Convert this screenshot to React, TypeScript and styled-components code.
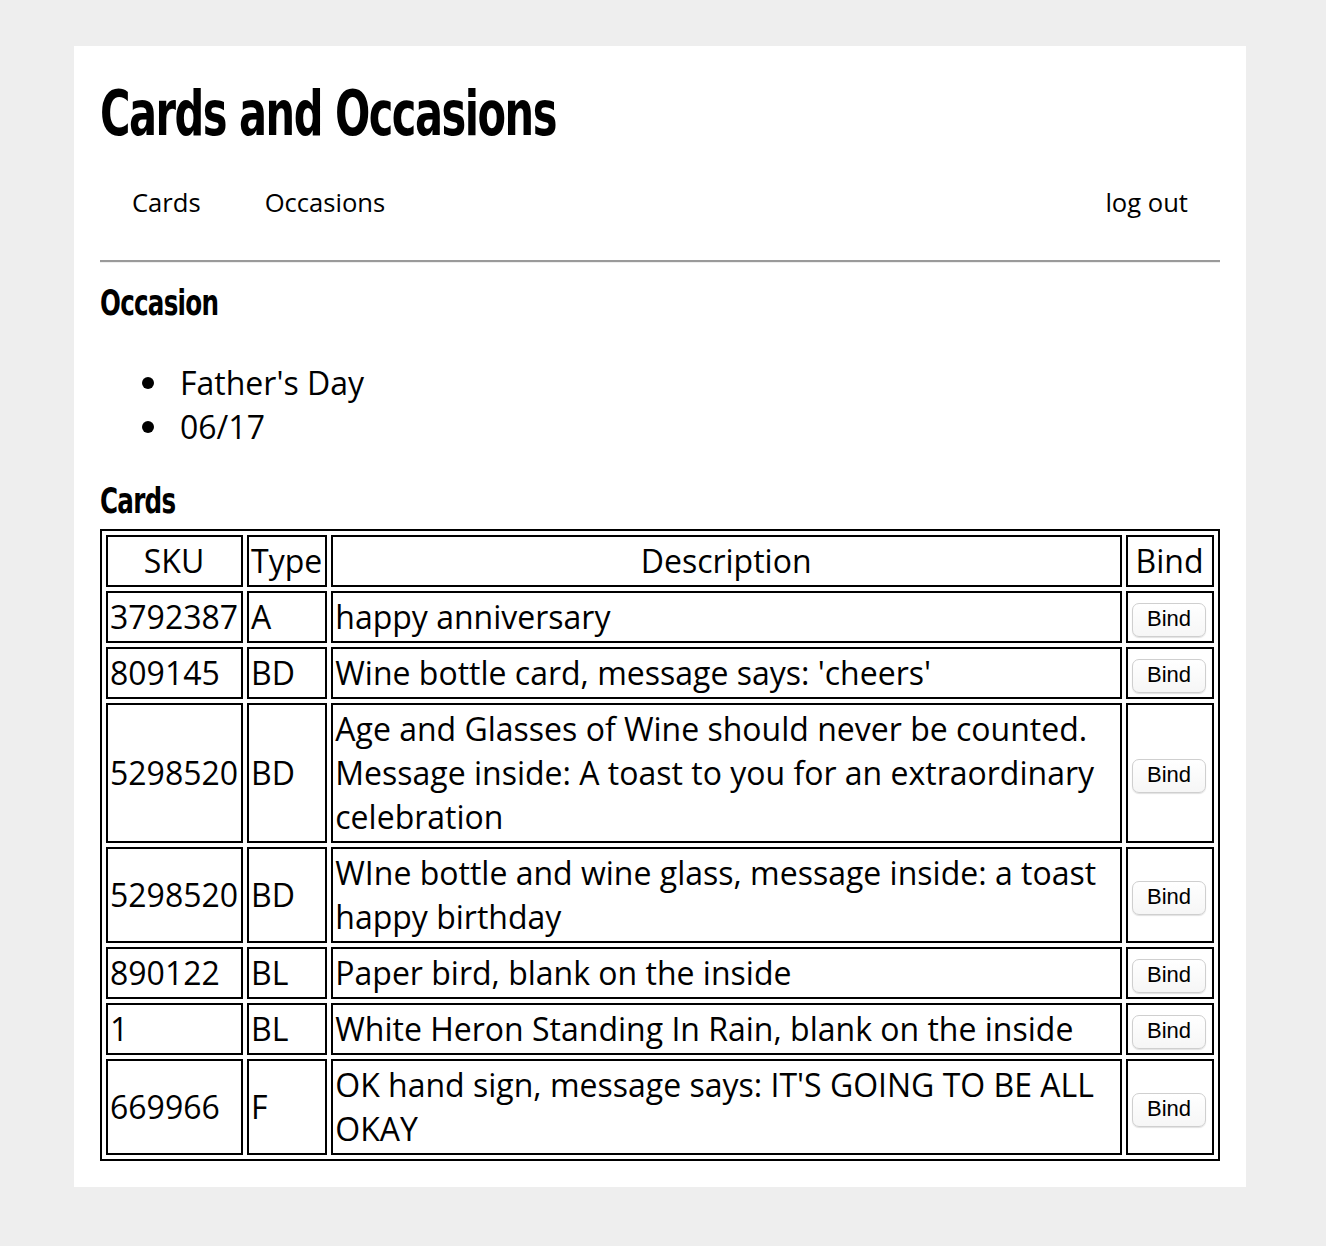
import React from "react";
import styled, {createGlobalStyle} from "styled-components";

const GlobalStyle = createGlobalStyle`
    html, body {
        margin: 0;
        background: #eee;
    }
    body {
        padding: 46px 0 60px 74px;
        font-family: "Open Sans", "Liberation Sans", sans-serif;
        color: #000;
    }
`;

const Panel = styled.div`
    box-sizing: border-box;
    width: 1172px;
    padding: 26px;
    background: #fff;
`;

// no narrow font installed, so squeeze the condensed bold face horizontally
const Title = styled.h1`
    margin: 0;
    font-family: "Liberation Sans Narrow", "DejaVu Sans Condensed", sans-serif;
    font-stretch: condensed;
    font-weight: bold;
    font-size: 62px;
    line-height: 83px;
    letter-spacing: -2px;
    transform: scaleX(0.745);
    transform-origin: left center;
    white-space: nowrap;
`;

const Nav = styled.nav`
    display: flex;
    justify-content: space-between;
    padding: 30px 0 0;
    font-size: 25.6px;
    line-height: 35px;
`;

const NavGroup = styled.div`
    display: flex;
`;

const NavLink = styled.a`
    padding: 0 32px;
    color: #000;
    text-decoration: none;
    cursor: pointer;
`;

const Rule = styled.hr`
    margin: 40px 0 0;
    height: 0;
    border: none;
    border-top: 2px solid #9a9a9a;
    border-bottom: 1px solid #eee;
`;

const SectionTitle = styled.h2`
    margin: 18px 0 6px;
    font-family: "Liberation Sans Narrow", "DejaVu Sans Condensed", sans-serif;
    font-stretch: condensed;
    font-weight: bold;
    font-size: 36px;
    line-height: 44px;
    letter-spacing: -1px;
    transform: scaleX(0.76);
    transform-origin: left center;
`;

const Details = styled.ul`
    margin: 36px 0 30px;
    padding-left: 80px;
    list-style: none;
    font-size: 32px;
    line-height: 44px;
`;

const Item = styled.li`
    &::before {
        content: "";
        display: inline-block;
        width: 12px;
        height: 12px;
        margin: 0 26px 0 -38px;
        border-radius: 50%;
        background: #000;
        vertical-align: 6px;
    }
`;

const Table = styled.table`
    width: 100%;
    border: 2px solid #000;
    border-spacing: 4px;
    font-size: 32px;
    line-height: 44px;
`;

const Cell = styled.td`
    border: 2px solid #000;
    padding: 2px 3px 2px 2px;
    vertical-align: middle;
`;

const HeadCell = styled.th`
    border: 2px solid #000;
    padding: 2px 3px 2px 2px;
    font-weight: normal;
    text-align: center;
`;

const BindButton = styled.button`
    margin: 0 3px 0 2px;
    padding: 3px 14px 5px;
    font-family: "Liberation Sans", Arial, sans-serif;
    font-size: 22px;
    line-height: 24px;
    color: #000;
    background: linear-gradient(#fff, #f6f6f6);
    border: 1px solid #cfcfcf;
    border-radius: 7px;
    box-shadow: 0 1px 1px rgba(0, 0, 0, 0.12);
    vertical-align: middle;
`;

const cards = [
    {sku: "3792387", type: "A", description: "happy anniversary"},
    {sku: "809145", type: "BD", description: "Wine bottle card, message says: 'cheers'"},
    {sku: "5298520", type: "BD", description: "Age and Glasses of Wine should never be counted. Message inside: A toast to you for an extraordinary celebration"},
    {sku: "5298520", type: "BD", description: "WIne bottle and wine glass, message inside: a toast happy birthday"},
    {sku: "890122", type: "BL", description: "Paper bird, blank on the inside"},
    {sku: "1", type: "BL", description: "White Heron Standing In Rain, blank on the inside"},
    {sku: "669966", type: "F", description: "OK hand sign, message says: IT'S GOING TO BE ALL OKAY"},
];

const App = () => (
    <>
        <GlobalStyle/>
        <Panel>
            <Title>Cards and Occasions</Title>
            <Nav>
                <NavGroup>
                    <NavLink>Cards</NavLink>
                    <NavLink>Occasions</NavLink>
                </NavGroup>
                <NavLink>log out</NavLink>
            </Nav>
            <Rule/>
            <SectionTitle>Occasion</SectionTitle>
            <Details>
                <Item>Father's Day</Item>
                <Item>06/17</Item>
            </Details>
            <SectionTitle>Cards</SectionTitle>
            <Table>
                <thead>
                    <tr>
                        <HeadCell>SKU</HeadCell>
                        <HeadCell>Type</HeadCell>
                        <HeadCell>Description</HeadCell>
                        <HeadCell>Bind</HeadCell>
                    </tr>
                </thead>
                <tbody>
                    {cards.map((card, index) => (
                        <tr key={index}>
                            <Cell>{card.sku}</Cell>
                            <Cell>{card.type}</Cell>
                            <Cell>{card.description}</Cell>
                            <Cell><BindButton>Bind</BindButton></Cell>
                        </tr>
                    ))}
                </tbody>
            </Table>
        </Panel>
    </>
);

export default App;
